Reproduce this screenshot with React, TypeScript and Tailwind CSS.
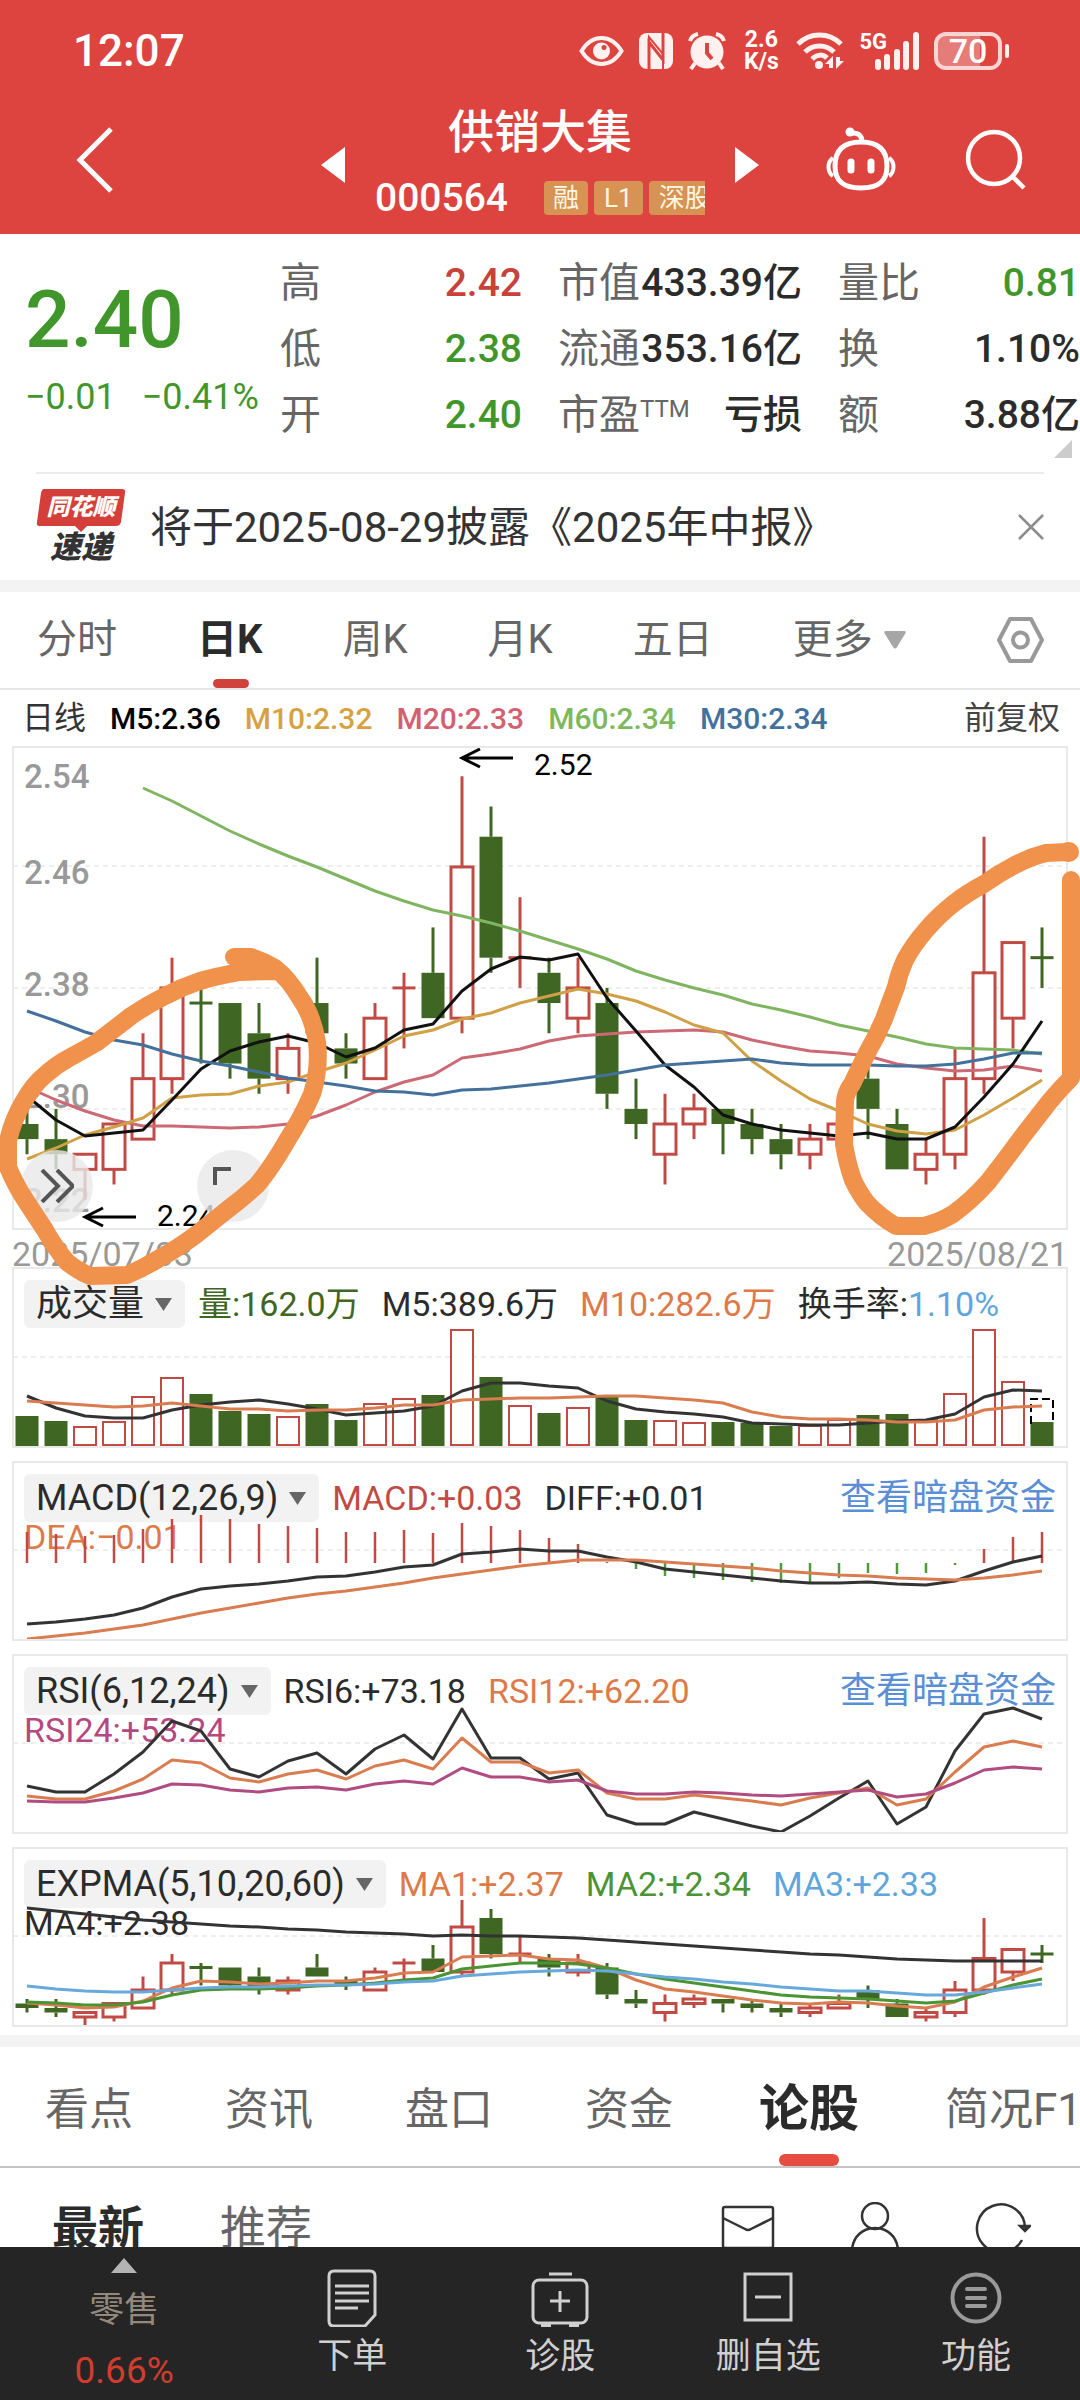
import React from 'react'

// [rising, high, low, body top, body bottom], in ticks of 0.01 below 2.54
type Candle = [boolean, number, number, number, number]

const CANDLES: Candle[] = [
  [false, 24, 27, 25, 26],
  [false, 24, 28, 26, 27],
  [true, 27, 30, 27, 28],
  [true, 25, 29, 25, 28],
  [true, 19, 26, 22, 26],
  [true, 14, 23, 16, 22],
  [false, 16, 21, 17, 17],
  [false, 17, 22, 17, 21],
  [false, 17, 23, 19, 22],
  [true, 19, 23, 20, 22],
  [false, 14, 19, 17, 19],
  [false, 19, 22, 20, 21],
  [true, 17, 22, 18, 22],
  [true, 15, 20, 16, 16],
  [false, 12, 18, 15, 18],
  [true, 2, 19, 8, 18],
  [false, 4, 15, 6, 14],
  [true, 10, 16, 14, 14],
  [false, 14, 19, 15, 17],
  [true, 14, 19, 16, 18],
  [false, 16, 24, 17, 23],
  [false, 22, 26, 24, 25],
  [true, 23, 29, 25, 27],
  [true, 23, 26, 24, 25],
  [false, 24, 27, 24, 25],
  [false, 24, 27, 25, 26],
  [false, 25, 28, 26, 27],
  [true, 25, 28, 26, 27],
  [true, 23, 26, 25, 26],
  [false, 21, 26, 22, 24],
  [false, 24, 28, 25, 28],
  [true, 26, 29, 27, 28],
  [true, 20, 28, 22, 27],
  [true, 6, 23, 15, 22],
  [true, 13, 20, 13, 18],
  [false, 12, 16, 14, 14],
]

const VOLUME = [
  30, 25, 20, 25, 50, 69, 52, 35, 32, 30, 42, 26, 43, 48, 51, 117, 69, 41, 33, 39, 51, 26, 26, 24, 24, 23, 20, 21,
  27, 31, 32, 27, 53, 117, 65, 24,
]

const MACD_BARS = [
  31, 29, 27, 28, 34, 44, 48, 44, 39, 37, 35, 31, 31, 33, 30, 40, 37, 33, 25, 19, 1, -6, -13, -15, -17, -19, -20,
  -19, -15, -10, -11, -10, -2, 14, 26, 31,
]

const MA = {
  m5: [
    1096, 1120, 1136, 1133, 1130, 1100, 1069, 1051, 1042, 1036, 1043, 1057, 1048, 1030, 1024, 991, 969, 957, 960, 954,
    998, 1031, 1065, 1087, 1115, 1124, 1130, 1133, 1136, 1133, 1139, 1139, 1127, 1097, 1064, 1021,
  ],
  m10: [
    1159, 1148, 1135, 1127, 1118, 1098, 1095, 1094, 1086, 1082, 1072, 1063, 1050, 1036, 1030, 1019, 1013, 1003, 996,
    989, 994, 1001, 1012, 1025, 1033, 1061, 1081, 1099, 1111, 1124, 1131, 1134, 1130, 1115, 1098, 1080,
  ],
  m20: [
    1087, 1100, 1111, 1120, 1126, 1126, 1127, 1128, 1127, 1124, 1116, 1105, 1092, 1082, 1075, 1058, 1054, 1049, 1041,
    1036, 1034, 1032, 1031, 1030, 1032, 1040, 1046, 1051, 1053, 1056, 1064, 1068, 1071, 1070, 1066, 1071,
  ],
  m30: [
    1011, 1021, 1032, 1040, 1045, 1054, 1061, 1066, 1072, 1078, 1082, 1086, 1091, 1092, 1095, 1090, 1089, 1086, 1083,
    1079, 1075, 1070, 1065, 1063, 1061, 1059, 1063, 1065, 1065, 1065, 1066, 1066, 1064, 1059, 1053, 1053,
  ],
  m60: [
    788, 801, 816, 831, 844, 856, 867, 879, 891, 901, 910, 916, 923, 931, 940, 949, 959, 971, 980, 988, 995, 1004,
    1010, 1017, 1025, 1031, 1037, 1044, 1048, 1049, 1050, 1054,
  ],
}

const VOL_MA = {
  m5: [
    1396, 1408, 1416, 1418, 1418, 1410, 1405, 1402, 1400, 1404, 1409, 1415, 1413, 1411, 1406, 1391, 1383, 1383, 1386,
    1388, 1401, 1409, 1412, 1414, 1417, 1423, 1424, 1425, 1425, 1423, 1421, 1420, 1414, 1397, 1390, 1391,
  ],
  m10: [
    1401, 1403, 1405, 1407, 1406, 1403, 1406, 1409, 1409, 1411, 1410, 1410, 1408, 1405, 1405, 1400, 1399, 1398, 1398,
    1397, 1396, 1396, 1398, 1400, 1403, 1412, 1417, 1419, 1419, 1420, 1422, 1422, 1420, 1410, 1407, 1406,
  ],
}

const MACD = {
  diff: [
    1624, 1622, 1619, 1615, 1608, 1597, 1589, 1586, 1584, 1581, 1577, 1576, 1572, 1567, 1565, 1554, 1552, 1549, 1551,
    1551, 1557, 1562, 1569, 1572, 1575, 1578, 1581, 1583, 1583, 1582, 1584, 1585, 1581, 1571, 1562, 1556,
  ],
  dea: [
    1639, 1636, 1633, 1629, 1625, 1619, 1613, 1608, 1603, 1598, 1594, 1591, 1587, 1583, 1578, 1574, 1570, 1566, 1563,
    1560, 1560, 1560, 1562, 1564, 1566, 1568, 1571, 1573, 1575, 1576, 1578, 1579, 1580, 1578, 1575, 1571,
  ],
}

const RSI = {
  r6: [
    1786, 1792, 1792, 1774, 1752, 1721, 1731, 1769, 1777, 1761, 1753, 1774, 1749, 1735, 1759, 1709, 1758, 1758, 1779,
    1773, 1815, 1824, 1824, 1812, 1819, 1826, 1832, 1816, 1798, 1781, 1824, 1807, 1751, 1714, 1708, 1719,
  ],
  r12: [
    1796, 1799, 1799, 1791, 1779, 1760, 1763, 1778, 1782, 1774, 1770, 1779, 1766, 1760, 1769, 1738, 1762, 1762, 1773,
    1770, 1793, 1799, 1799, 1795, 1798, 1801, 1805, 1798, 1793, 1788, 1805, 1799, 1772, 1747, 1741, 1747,
  ],
  r24: [
    1801, 1802, 1802, 1798, 1793, 1784, 1785, 1790, 1792, 1788, 1787, 1790, 1784, 1781, 1784, 1768, 1777, 1777, 1782,
    1780, 1791, 1794, 1794, 1792, 1793, 1795, 1796, 1794, 1792, 1790, 1797, 1794, 1783, 1770, 1767, 1769,
  ],
}

const EXPMA = {
  ma1: [
    2003, 2005, 2008, 2007, 2001, 1988, 1981, 1982, 1984, 1983, 1981, 1981, 1978, 1973, 1972, 1957, 1956, 1955, 1959,
    1960, 1968, 1980, 1989, 1992, 1996, 2000, 2003, 2004, 2002, 2003, 2006, 2008, 2002, 1987, 1977, 1968,
  ],
  ma2: [
    2002, 2003, 2005, 2005, 2002, 1995, 1990, 1989, 1989, 1988, 1986, 1985, 1983, 1980, 1978, 1969, 1966, 1963, 1963,
    1964, 1968, 1974, 1979, 1983, 1987, 1991, 1995, 1997, 1998, 1999, 2001, 2003, 2001, 1993, 1985, 1979,
  ],
  ma3: [
    1986, 1989, 1991, 1992, 1992, 1990, 1988, 1987, 1987, 1986, 1985, 1985, 1984, 1982, 1981, 1976, 1974, 1972, 1971,
    1970, 1971, 1974, 1977, 1979, 1982, 1984, 1987, 1989, 1991, 1991, 1993, 1995, 1995, 1992, 1988, 1984,
  ],
  ma4: [
    1908, 1911, 1914, 1917, 1920, 1922, 1924, 1926, 1927, 1929, 1930, 1932, 1933, 1934, 1936, 1935, 1936, 1936, 1937,
    1938, 1940, 1942, 1944, 1946, 1948, 1950, 1952, 1954, 1955, 1957, 1959, 1960, 1961, 1961, 1961, 1961,
  ],
}

const AXIS = [
  { label: '2.54', y: 788 },
  { label: '2.46', y: 884 },
  { label: '2.38', y: 996 },
  { label: '2.30', y: 1108 },
  { label: '2.22', y: 1212 },
]

const RED = '#c24a44'
const GREEN = '#3f6622'

const xAt = (i: number) => 27 + 29 * i

function Line({ values, color, from = 0, width = 3 }: { values: number[]; color: string; from?: number; width?: number }) {
  return (
    <polyline
      points={values.map((v, i) => `${xAt(i + from)},${v}`).join(' ')}
      fill="none"
      stroke={color}
      strokeWidth={width}
      strokeLinejoin="round"
    />
  )
}

function Grid({ ys }: { ys: number[] }) {
  return (
    <>
      {ys.map((y) => (
        <line key={y} x1={13} x2={1067} y1={y} y2={y} stroke="#dcdcdc" strokeWidth={1} strokeDasharray="5 4" />
      ))}
    </>
  )
}

function Candles({ top, tick, stroke = 3 }: { top: number; tick: number; stroke?: number }) {
  const y = (n: number) => top + n * tick
  return (
    <>
      {CANDLES.map(([up, high, low, a, b], i) => {
        const x = xAt(i)
        const color = up ? RED : GREEN
        if (a === b) {
          return (
            <g key={i} stroke={color} strokeWidth={stroke}>
              <line x1={x} x2={x} y1={y(high)} y2={y(low)} />
              <line x1={x - 11.5} x2={x + 11.5} y1={y(a)} y2={y(a)} />
            </g>
          )
        }
        return (
          <g key={i} stroke={color} strokeWidth={stroke}>
            <line x1={x} x2={x} y1={y(high)} y2={y(a)} />
            <line x1={x} x2={x} y1={y(b)} y2={y(low)} />
            {up ? (
              <rect x={x - 11} y={y(a)} width={22} height={y(b) - y(a)} fill="#fff" />
            ) : (
              <rect x={x - 11.5} y={y(a)} width={23} height={y(b) - y(a)} fill={color} stroke="none" />
            )}
          </g>
        )
      })}
    </>
  )
}

function StatusBar() {
  return (
    <div className="flex h-[102px] items-center justify-between pl-[73px] pr-[71px]">
      <span className="text-[44px] font-medium leading-none">12:07</span>
      <div className="flex items-center gap-[15px]">
        <svg width="45" height="32" viewBox="0 0 45 32" fill="none">
          <path d="M2.5 16C8 7 15 3 22.500 3S37 7 42.500 16C37 25 30 29 22.500 29S8 25 2.500 16Z" stroke="#fff1f0" strokeWidth="4" />
          <circle cx="22.500" cy="16" r="8.500" fill="#fff1f0" />
          <circle cx="25" cy="12.500" r="2.500" fill="#dd443f" />
        </svg>
        <svg width="34" height="36" viewBox="0 0 34 36">
          <rect width="34" height="36" rx="8" fill="#fff1f0" />
          <path d="M10 36V9L24 27V0" fill="none" stroke="#dd443f" strokeWidth="3" />
          <path d="M10 9V4L24 21V36" fill="none" stroke="#dd443f" strokeWidth="2" />
        </svg>
        <svg width="38" height="38" viewBox="0 0 38 38">
          <circle cx="19" cy="20" r="16.500" fill="#fff1f0" />
          <path d="M2 9C3 5 6 3 10 2M28 2C32 3 35 5 36 9" stroke="#fff1f0" strokeWidth="4" fill="none" />
          <path d="M7 31L3 37M31 31L35 37" stroke="#fff1f0" strokeWidth="4" />
          <path d="M19 11V21L24 27" stroke="#dd443f" strokeWidth="4" fill="none" />
        </svg>
        <div className="flex w-[40px] flex-col text-center text-[23px] font-bold leading-[22px]">
          <span>2.6</span>
          <span>K/s</span>
        </div>
        <svg width="48" height="38" viewBox="0 0 48 38" fill="none" stroke="#fff1f0" strokeWidth="5">
          <path d="M2 12C14 0 33 0 45 12" />
          <path d="M9 20C17 12 30 12 38 20" />
          <path d="M16 27C21 22 27 22 31 26" />
          <circle cx="23" cy="33" r="4" fill="#fff1f0" stroke="none" />
          <path d="M37 36V24L29 32H33V36ZM40 25V37L48 29H44V25Z" fill="#fff1f0" stroke="none" />
        </svg>
        <div className="flex h-[38px] items-start">
          <span className="text-[22px] font-bold leading-[20px]">5G</span>
          <svg className="-ml-3" width="44" height="38" viewBox="0 0 44 38" fill="#fff1f0">
            <rect x="0" y="27" width="6" height="11" rx="3" />
            <rect x="9" y="22" width="6" height="16" rx="3" />
            <rect x="19" y="17" width="6" height="21" rx="3" />
            <rect x="28" y="9" width="6" height="29" rx="3" />
            <rect x="38" y="0" width="6" height="38" rx="3" />
          </svg>
        </div>
        <div className="flex items-center gap-[3px]">
          <div className="flex h-[38px] w-[68px] items-center justify-center rounded-[12px] border-4 border-[#fbd5d3] bg-linear-to-r from-[#e57c78] from-70% to-[#dd443f] to-70% text-[34px] font-medium leading-none">
            70
          </div>
          <div className="h-3.5 w-1 rounded bg-[#fff1f0]" />
        </div>
      </div>
    </div>
  )
}

function Header() {
  return (
    <header className="bg-[#dd443f] text-white">
      <StatusBar />
      <div className="grid h-[132px] grid-cols-[1fr_auto_1fr] items-start">
        <button aria-label="返回" className="justify-self-start pl-[76px] pt-6">
          <svg width="38" height="68" viewBox="0 0 38 68" fill="none" stroke="#fff" strokeWidth="5">
            <path d="M35 3L4 34L35 65" />
          </svg>
        </button>
        <div className="flex items-center gap-[30px]">
          <button aria-label="上一只">
            <svg width="24" height="36" viewBox="0 0 24 36" fill="#fff">
              <path d="M24 0V36L0 18Z" />
            </svg>
          </button>
          <div className="w-[330px] overflow-hidden pt-0.5">
            <h1 className="text-center text-[46px] font-medium leading-[56px]">供销大集</h1>
            <div className="mt-2 flex items-center leading-[60px]">
              <span className="w-[169px] shrink-0 text-[39px] font-medium">000564</span>
              <div className="flex shrink-0 gap-1.5 text-[26px] leading-[34px] text-[#fff6e4]">
                <span className="rounded bg-[#d79353] px-[9px]">融</span>
                <span className="rounded bg-[#d79353] px-[10px]">L1</span>
                <span className="rounded bg-[#d79353] px-[10px]">深股通</span>
              </div>
            </div>
          </div>
          <button aria-label="下一只">
            <svg width="24" height="36" viewBox="0 0 24 36" fill="#fff">
              <path d="M0 0V36L24 18Z" />
            </svg>
          </button>
        </div>
        <div className="flex items-center gap-[69px] justify-self-end pr-[54px] pt-6">
          <button aria-label="智能助手">
            <svg width="70" height="66" viewBox="0 0 70 66" fill="none" stroke="#fff" strokeWidth="5">
              <path d="M35 16C52 16 61 24 61 40C61 56 52 62 35 62S9 56 9 40C9 24 18 16 35 16Z" />
              <path d="M7 32C1 36 1 46 7 50M63 32C69 36 69 46 63 50" strokeWidth="4" />
              <path d="M36 16C36 9 32 7 26 7" />
              <circle cx="24" cy="6" r="4.500" fill="#fff" stroke="none" />
              <path d="M25 36V44M45 36V44" strokeWidth="7" strokeLinecap="round" />
            </svg>
          </button>
          <button aria-label="搜索">
            <svg width="61" height="62" viewBox="0 0 61 62" fill="none" stroke="#fff" strokeWidth="4.500">
              <circle cx="29" cy="30" r="26" />
              <path d="M47 48L59 60" />
            </svg>
          </button>
        </div>
      </div>
    </header>
  )
}

function Stat({ label, value, color = 'text-[#2b2b2b]', sup }: { label: string; value: string; color?: string; sup?: string }) {
  return (
    <div className="flex justify-between leading-[66px]">
      <dt className="text-[41px] text-[#666]">
        {label}
        {sup && <sup className="text-[24px] leading-none">{sup}</sup>}
      </dt>
      <dd className={`text-[39px] font-medium ${color}`}>{value}</dd>
    </div>
  )
}

function Quote() {
  return (
    <section className="flex h-[238px] items-start overflow-hidden pl-[25px] pt-4">
      <div className="w-[255px] shrink-0 pt-[26px] text-[#41962b]">
        <div className="text-[80px] font-medium leading-[88px]">2.40</div>
        <div className="flex gap-[26px] pt-3 text-[36px] leading-[42px]">
          <span>−0.01</span>
          <span>−0.41%</span>
        </div>
      </div>
      <dl className="w-[242px] shrink-0">
        <Stat label="高" value="2.42" color="text-[#c8423c]" />
        <Stat label="低" value="2.38" color="text-[#41962b]" />
        <Stat label="开" value="2.40" color="text-[#41962b]" />
      </dl>
      <dl className="ml-9 w-[244px] shrink-0 whitespace-nowrap">
        <Stat label="市值" value="433.39亿" />
        <Stat label="流通" value="353.16亿" />
        <Stat label="市盈" sup="TTM" value="亏损" />
      </dl>
      <dl className="relative ml-9 grow">
        <Stat label="量比" value="0.81" color="text-[#41962b]" />
        <Stat label="换" value="1.10%" />
        <Stat label="额" value="3.88亿" />
        <svg className="absolute -bottom-2.5 right-2" width="18" height="18" viewBox="0 0 18 18" fill="#ccc">
          <path d="M18 0V18H0Z" />
        </svg>
      </dl>
    </section>
  )
}

function News() {
  return (
    <section className="mx-9 flex h-[108px] items-center border-t-2 border-[#ececec]">
      <div className="relative w-[90px] shrink-0 text-center italic">
        <svg className="absolute inset-x-0 top-0" width="90" height="44" viewBox="0 0 90 44" fill="#d43f3a">
          <path d="M8 0H86Q90 0 89 4L85 33Q84 37 80 37H51L45 43L39 37H4Q0 37 1 33L5 4Q6 0 8 0Z" />
        </svg>
        <div className="relative text-[23px] font-black leading-[38px] text-white">同花顺</div>
        <div className="mt-1 text-[31px] font-black leading-[34px] text-[#333]">速递</div>
      </div>
      <a href="#report" className="ml-6 grow whitespace-nowrap text-[42px] text-[#333]">
        将于2025-08-29披露《2025年中报》
      </a>
      <button aria-label="关闭">
        <svg width="26" height="26" viewBox="0 0 26 26" stroke="#8c8c8c" strokeWidth="2.500">
          <path d="M1 1L25 25M25 1L1 25" />
        </svg>
      </button>
    </section>
  )
}

const PERIODS = ['分时', '日K', '周K', '月K', '五日']

function PeriodTabs() {
  return (
    <nav className="flex h-[98px] items-stretch gap-20 border-b-2 border-[#e6e6e6] pl-[37px] pr-[35px] text-[40px] text-[#666]">
      {PERIODS.map((p) => (
        <button key={p} className={p === '日K' ? 'relative font-bold text-[#2b2b2b]' : ''}>
          {p}
          {p === '日K' && <span className="absolute bottom-0 left-4 h-[9px] w-9 rounded-full bg-[#d0433d]" />}
        </button>
      ))}
      <button className="flex items-center gap-2.5">
        更多
        <svg width="24" height="18" viewBox="0 0 24 18" fill="#a6a6a6">
          <path d="M3 0H21Q24 0 22 3L14 16Q12 19 10 16L2 3Q0 0 3 0Z" />
        </svg>
      </button>
      <button aria-label="设置" className="ml-auto">
        <svg width="49" height="48" viewBox="0 0 49 48" fill="none" stroke="#999" strokeWidth="4">
          <path d="M14 3H35L46 24L35 45H14L3 24Z" strokeLinejoin="round" />
          <circle cx="24.500" cy="24" r="7.500" />
        </svg>
      </button>
    </nav>
  )
}

function MainLegend() {
  return (
    <div className="flex h-[56px] items-center gap-6 pl-[22px] pr-5 text-[30px] font-medium">
      <span className="text-[32px] font-normal text-[#333]">日线</span>
      <span className="text-black">M5:2.36</span>
      <span className="text-[#d8a13f]">M10:2.32</span>
      <span className="text-[#d4606f]">M20:2.33</span>
      <span className="text-[#7db95a]">M60:2.34</span>
      <span className="text-[#41719f]">M30:2.34</span>
      <span className="ml-auto text-[32px] font-normal text-[#444]">前复权</span>
    </div>
  )
}

function MainChart() {
  return (
    <section className="relative">
      <div className="mx-3 border-2 border-[#e9e9e9]">
        <svg className="block w-full" viewBox="14 748 1052 480">
          <Grid ys={[866, 988, 1109]} />
          <g fontSize="33" fontWeight="500" fill="#999">
            {AXIS.map((a) => (
              <text key={a.label} x={24} y={a.y}>
                {a.label}
              </text>
            ))}
          </g>
          <Candles top={746} tick={15.12} />
          <Line values={MA.m60} from={4} color="#7fb560" />
          <Line values={MA.m20} color="#cb6a75" />
          <Line values={MA.m10} color="#d0a046" />
          <Line values={MA.m5} color="#111" />
          <Line values={MA.m30} color="#44709c" />
          <g stroke="#000" strokeWidth="3" fill="none">
            <path d="M513 758H462M480 749L462 758L480 767" />
            <path d="M136 1217H85M103 1208L85 1217L103 1226" />
          </g>
          <g fontSize="30" fill="#000">
            <text x={534} y={775}>
              2.52
            </text>
            <text x={157} y={1226}>
              2.24
            </text>
          </g>
        </svg>
      </div>
      <div className="flex justify-between px-3 pt-[11px] text-[34px] leading-[26px] text-[#999]">
        <span>2025/07/03</span>
        <span>2025/08/21</span>
      </div>
      <button
        aria-label="展开"
        className="absolute left-[21px] top-[404px] flex size-[72px] items-center justify-center rounded-full bg-[#e8e8e8]/80"
      >
        <svg width="34" height="34" viewBox="0 0 34 34" fill="none" stroke="#555" strokeWidth="4">
          <path d="M2 1L18 17L2 33M17 1L33 17L17 33" />
        </svg>
      </button>
      <button
        aria-label="全屏"
        className="absolute left-[197px] top-[404px] size-[72px] rounded-full bg-[#e8e8e8]/80 pb-5 pl-4"
      >
        <svg width="18" height="18" viewBox="0 0 18 18" fill="none" stroke="#555" strokeWidth="4">
          <path d="M2 18V2H18" />
        </svg>
      </button>
      {/* hand-drawn marks */}
      <svg
        className="pointer-events-none absolute inset-x-0 top-0 z-10 w-full"
        viewBox="0 746 1080 545"
        fill="none"
        stroke="#f0924c"
        strokeWidth="18"
        strokeLinecap="round"
        strokeLinejoin="round"
      >
        <path d="M234 957L251 957Q263 961 275 968Q289 979 300 998Q312 1014 317 1042Q320 1068 312 1094Q302 1117 288 1139Q272 1167 257 1185Q243 1198 227 1210L197 1234Q177 1249 158 1259Q142 1269 127 1275L90 1276Q78 1271 67 1262Q55 1248 45 1230L24 1198Q14 1182 8 1167L8 1141Q13 1119 24 1101Q33 1085 45 1075Q56 1065 69 1058L96 1043L131 1016Q147 1005 165 996Q182 987 200 981Q217 976 240 972L275 971" />
        <path d="M1068 852L1046 853Q1030 857 1015 865Q998 874 984 884Q967 893 953 904Q938 916 926 930Q913 945 905 960Q899 973 896 987L884 1019Q877 1036 867 1053L852 1084Q846 1092 845 1101L844 1144Q847 1163 853 1180Q859 1193 867 1203Q880 1217 896 1226L924 1226Q940 1222 953 1214Q971 1201 988 1182Q1006 1159 1022 1137L1050 1101Q1061 1088 1071 1078V880" />
        <path d="M1068 852H1069" strokeWidth="20" />
      </svg>
    </section>
  )
}

type Item = { text: string; color: string }

function Panel({
  name,
  items,
  extra,
  link,
  viewBox,
  children,
}: {
  name: string
  items: React.ReactNode
  extra?: Item
  link?: boolean
  viewBox: string
  children: React.ReactNode
}) {
  return (
    <section className="grid border-2 border-[#e9e9e9]">
      <div className="col-start-1 row-start-1 px-2.5 pt-[11px] text-[36px] text-[#2b2b2b]">
        <div className="flex items-center gap-[13px] whitespace-nowrap leading-[48px]">
          <button className="flex items-center gap-2.5 rounded-md bg-[#f2f2f2] px-3">
            {name}
            <svg width="19" height="13" viewBox="0 0 19 13" fill="#666">
              <path d="M1 0H18L9.500 13Z" />
            </svg>
          </button>
          <div className="flex gap-[22px] text-[34px]">{items}</div>
          {link && (
            <a href="#funds" className="ml-auto text-[36px] text-[#5a8fd6]">
              查看暗盘资金
            </a>
          )}
        </div>
        {extra && <div className={`text-[34px] leading-[30px] ${extra.color}`}>{extra.text}</div>}
      </div>
      <svg className="pointer-events-none col-start-1 row-start-1 block w-full" viewBox={viewBox}>
        {children}
      </svg>
    </section>
  )
}

function Indicators() {
  return (
    <div className="flex flex-col gap-[13px] px-3 pb-2">
      <Panel
        name="成交量"
        viewBox="14 1269 1052 177"
        items={
          <>
            <span className="text-[#3f6622]">量:162.0万</span>
            <span>M5:389.6万</span>
            <span className="text-[#dd7a4a]">M10:282.6万</span>
            <span>
              换手率:<span className="text-[#5ea6dc]">1.10%</span>
            </span>
          </>
        }
      >
        <Grid ys={[1357]} />
        {VOLUME.map((h, i) =>
          CANDLES[i][0] ? (
            <rect key={i} x={xAt(i) - 11} y={1447 - h} width={22} height={h - 2} fill="#fff" stroke={RED} strokeWidth={2} />
          ) : (
            <rect key={i} x={xAt(i) - 11.5} y={1446 - h} width={23} height={h} fill={GREEN} />
          ),
        )}
        <path d="M1031 1424V1399H1053V1424" fill="none" stroke="#000" strokeWidth="2" strokeDasharray="8 4" />
        <Line values={VOL_MA.m5} color="#333" />
        <Line values={VOL_MA.m10} color="#d97c50" />
      </Panel>

      <Panel
        name="MACD(12,26,9)"
        viewBox="14 1463 1052 176"
        link
        extra={{ text: 'DEA:−0.01', color: 'text-[#dd7a4a]' }}
        items={
          <>
            <span className="text-[#c24a44]">MACD:+0.03</span>
            <span>DIFF:+0.01</span>
          </>
        }
      >
        <Grid ys={[1550]} />
        {MACD_BARS.map((h, i) => (
          <line
            key={i}
            x1={xAt(i)}
            x2={xAt(i)}
            y1={1563}
            y2={1563 - h}
            stroke={h > 0 ? RED : '#4f9a3a'}
            strokeWidth={2.5}
          />
        ))}
        <Line values={MACD.diff} color="#333" />
        <Line values={MACD.dea} color="#d97c50" />
      </Panel>

      <Panel
        name="RSI(6,12,24)"
        viewBox="14 1656 1052 176"
        link
        extra={{ text: 'RSI24:+53.24', color: 'text-[#b5497f]' }}
        items={
          <>
            <span>RSI6:+73.18</span>
            <span className="text-[#dd7a4a]">RSI12:+62.20</span>
          </>
        }
      >
        <Grid ys={[1743]} />
        <Line values={RSI.r6} color="#333" />
        <Line values={RSI.r12} color="#d97c50" />
        <Line values={RSI.r24} color="#b04c80" />
      </Panel>

      <Panel
        name="EXPMA(5,10,20,60)"
        viewBox="14 1849 1052 176"
        extra={{ text: 'MA4:+2.38', color: 'text-[#2b2b2b]' }}
        items={
          <>
            <span className="text-[#dd7a4a]">MA1:+2.37</span>
            <span className="text-[#4a9434]">MA2:+2.34</span>
            <span className="text-[#5ea6dc]">MA3:+2.33</span>
          </>
        }
      >
        <Grid ys={[1936]} />
        <Candles top={1891} tick={4.5} />
        <Line values={EXPMA.ma1} color="#d97c50" />
        <Line values={EXPMA.ma2} color="#4a9434" />
        <Line values={EXPMA.ma3} color="#68a9dc" />
        <Line values={EXPMA.ma4} color="#333" />
      </Panel>
    </div>
  )
}

const SECTIONS = ['看点', '资讯', '盘口', '资金', '论股', '简况F10']

function SectionTabs() {
  return (
    <nav className="flex h-[121px] items-stretch gap-[92px] overflow-hidden whitespace-nowrap border-b-2 border-[#c4c4c4] pl-[45px] text-[44px] text-[#666]">
      {SECTIONS.map((s) => (
        <button
          key={s}
          className={
            s === '论股' ? 'relative -mx-1.5 shrink-0 pt-1.5 text-[50px] font-bold text-[#2b2b2b]' : 'shrink-0 pt-1.5'
          }
        >
          {s}
          {s === '论股' && <span className="absolute inset-x-5 bottom-0 h-3 rounded-full bg-[#e64c3f]" />}
        </button>
      ))}
    </nav>
  )
}

function FeedBar() {
  return (
    <div className="flex h-[79px] items-start overflow-hidden pl-[52px] pr-[49px] text-[46px] leading-[56px] text-[#666]">
      <button className="pt-8 font-bold text-[#2b2b2b]">最新</button>
      <button className="ml-[76px] pt-8">推荐</button>
      <div className="ml-auto flex gap-[76px] pt-[34px]">
        <button aria-label="消息">
          <svg width="54" height="52" viewBox="0 0 54 52" fill="none" stroke="#333" strokeWidth="2.500">
            <rect x="2" y="5" width="50" height="41" rx="2" />
            <path d="M2 16L24 27Q27 29 30 27L52 16" />
          </svg>
        </button>
        <button aria-label="我的">
          <svg width="48" height="52" viewBox="0 0 48 52" fill="none" stroke="#333" strokeWidth="2.500">
            <circle cx="24" cy="14" r="13" />
            <path d="M1 50C1 18 47 18 47 50" />
          </svg>
        </button>
        <button aria-label="刷新">
          <svg width="56" height="52" viewBox="0 0 56 52" fill="none" stroke="#333" strokeWidth="2.500">
            <path d="M50 26A24 24 0 1 0 47 38" />
            <path d="M45 24H55L50 29Z" fill="#333" />
          </svg>
        </button>
      </div>
    </div>
  )
}

function NavButton({ label, children }: { label: string; children: React.ReactNode }) {
  return (
    <button className="flex flex-1 flex-col items-center pt-[22px] text-[35px] leading-[48px] text-[#d0d0d0]">
      <svg width="58" height="58" viewBox="0 0 58 58" fill="none" stroke="#d0d0d0" strokeWidth="3">
        {children}
      </svg>
      <span className="pt-1.5">{label}</span>
    </button>
  )
}

function BottomNav() {
  return (
    <nav className="flex h-[153px] bg-[#252525]">
      <button className="flex w-[23%] flex-col items-center pt-[11px]">
        <svg width="26" height="15" viewBox="0 0 26 15" fill="#b4b4b4">
          <path d="M13 0L26 15H0Z" />
        </svg>
        <span className="pt-3.5 text-[35px] leading-[48px] text-[#94897c]">零售</span>
        <span className="pt-3 text-[37px] leading-[48px] text-[#d23c2e]">0.66%</span>
      </button>
      <NavButton label="下单">
        <path d="M11 2H47Q52 2 52 7V46L42 57H11Q6 57 6 52V7Q6 2 11 2Z" />
        <path d="M12 17H46M12 24H46M12 32H46M12 39H35" />
      </NavButton>
      <NavButton label="诊股">
        <path d="M18 5H41" />
        <rect x="2" y="11" width="54" height="43" rx="6" />
        <path d="M10 56H20M38 56H48" strokeWidth="4" />
        <path d="M29 22V43M19 32H39" />
      </NavButton>
      <NavButton label="删自选">
        <rect x="6" y="5" width="46" height="46" />
        <path d="M16 28H42" />
      </NavButton>
      <NavButton label="功能">
        <circle cx="29" cy="29" r="23.500" stroke="#9a9a9a" strokeWidth="4" />
        <path d="M20 20H38M20 29H38M20 37H38" stroke="#9a9a9a" strokeWidth="4" strokeLinecap="round" />
      </NavButton>
    </nav>
  )
}

export default function App() {
  return (
    <div className="min-h-screen overflow-hidden bg-white font-[Roboto,'Noto_Sans_CJK_SC',sans-serif]">
      <Header />
      <main>
        <Quote />
        <News />
        <div className="h-3 bg-[#f3f3f3]" />
        <PeriodTabs />
        <MainLegend />
        <MainChart />
        <Indicators />
        <div className="h-3 bg-[#f3f3f3]" />
        <SectionTabs />
        <FeedBar />
      </main>
      <BottomNav />
    </div>
  )
}
